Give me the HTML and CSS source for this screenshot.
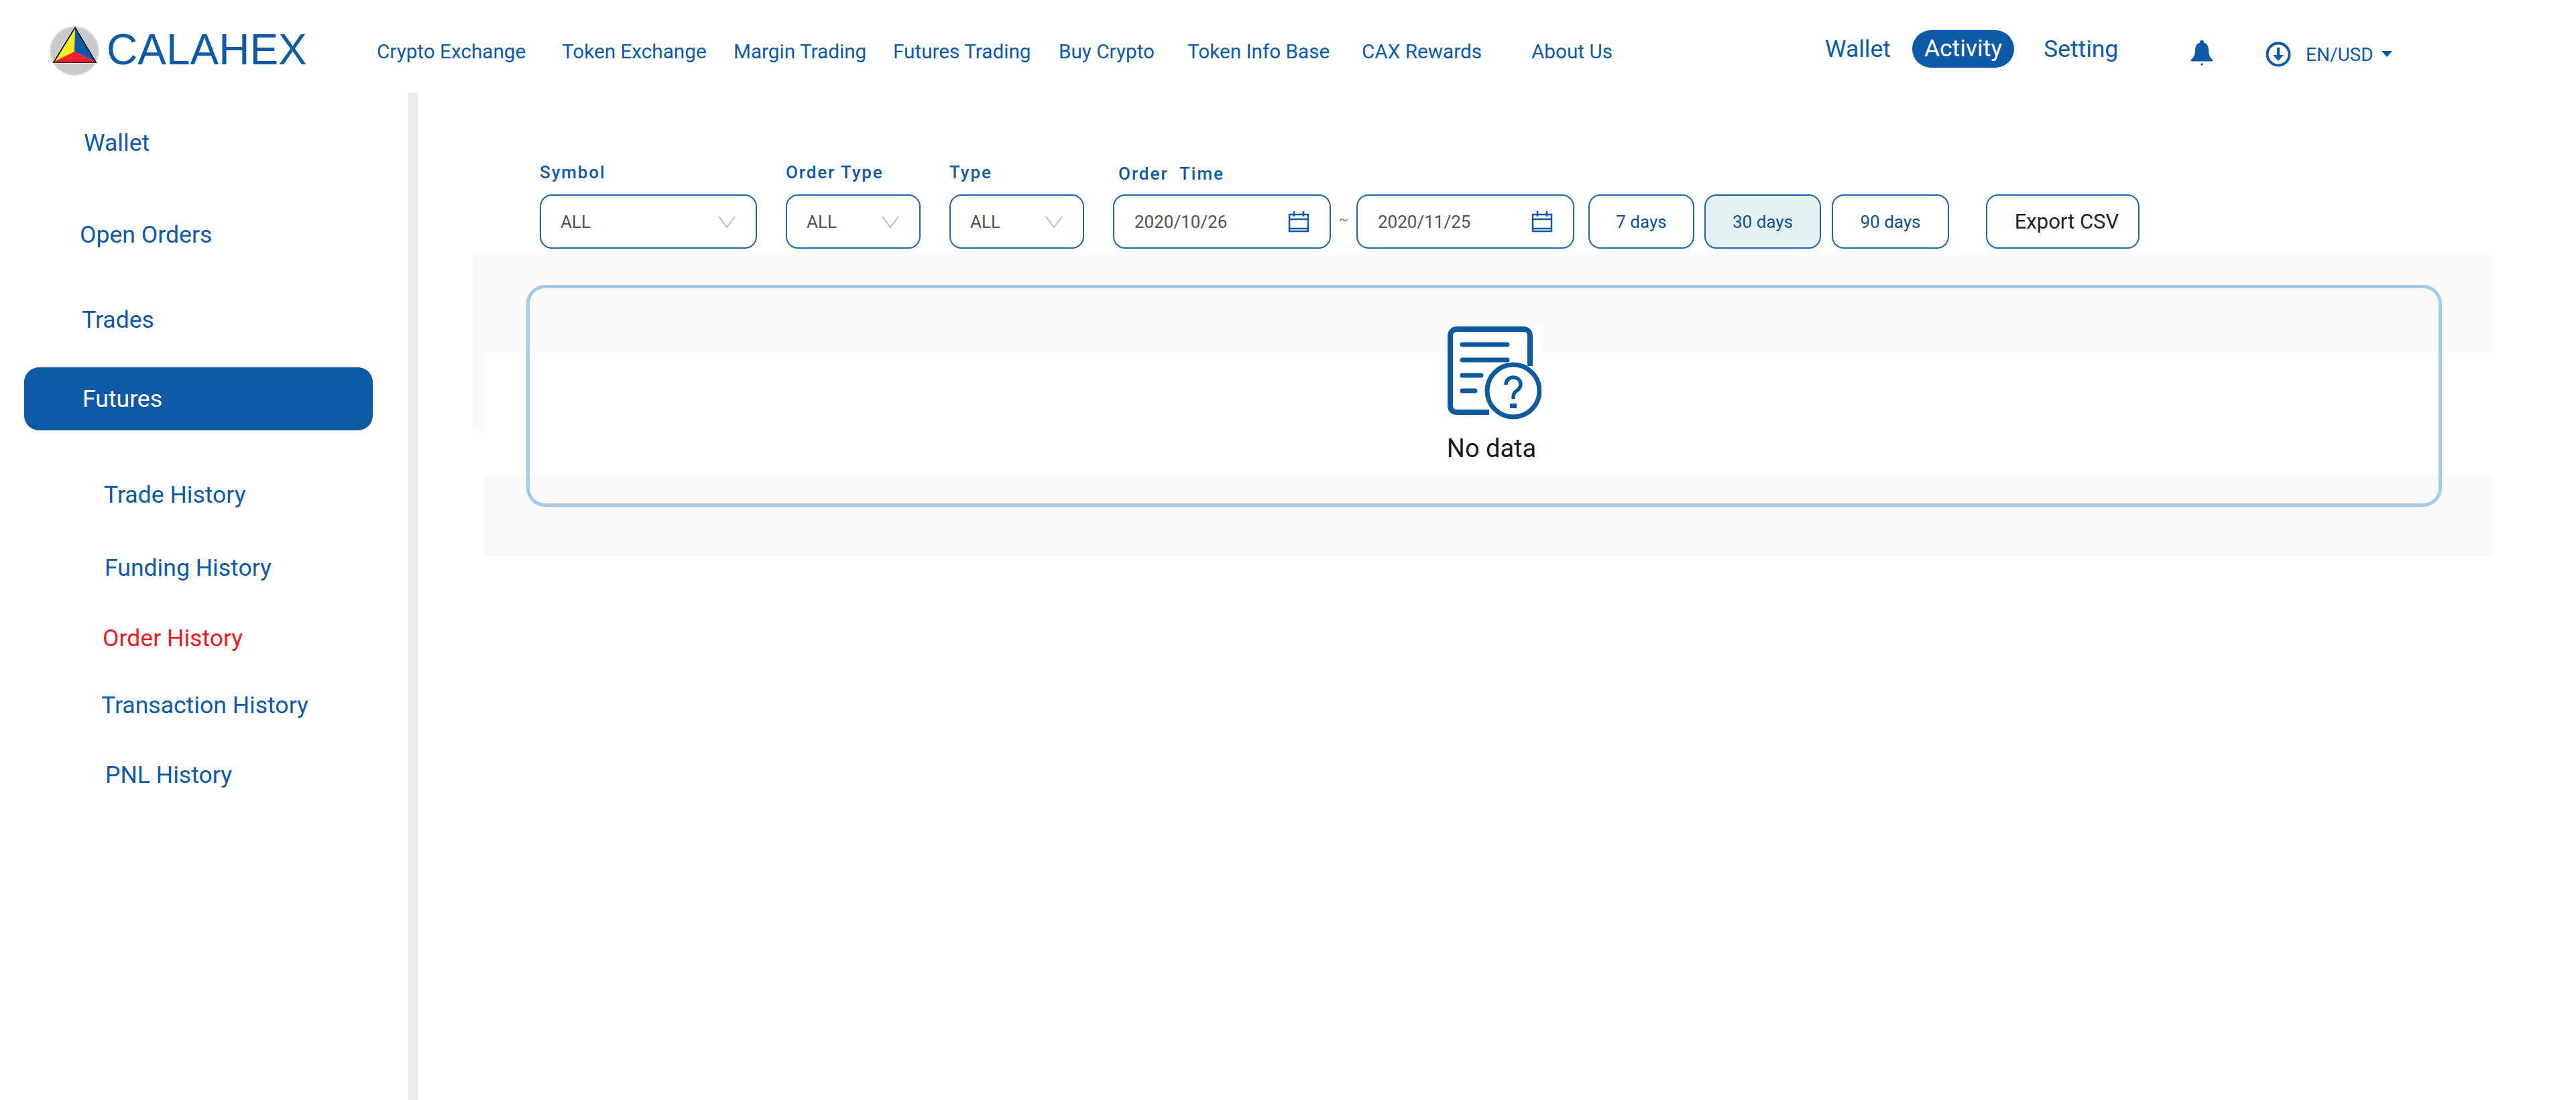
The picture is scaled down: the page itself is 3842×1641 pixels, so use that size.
FILE: index.html
```html
<!DOCTYPE html>
<html lang="en">
<head>
    <meta charset="UTF-8">
    <title>Calahex · Order History</title>
    <link rel="stylesheet" href="styles.css">
</head>
<body>

    <!-- top bar -->
    <header class="topbar">
        <div class="brand">
            <svg class="brand-logo" viewBox="0 0 74 74">
                <circle cx="37" cy="37" r="36" fill="#c9cacc" stroke="#dcdcde" stroke-width="2"/>
                <polygon points="38,-1 3,56 72,56" fill="#fff" opacity="0.7"/>
                <polygon points="38,3 37,38 7,53" fill="#fdec21"/>
                <polygon points="38,3 37,38 68,53" fill="#0f5aa7"/>
                <polygon points="37,38 7,53 68,53" fill="#ee2229"/>
                <path d="M38 2 L6 54 H69 Z" fill="none" stroke="#1a1a2a" stroke-width="2"/>
                <rect x="6" y="53" width="63" height="2" fill="#6b1a22"/>
            </svg>
            <span class="brand-name">CALAHEX</span>
        </div>
        <nav class="mainnav">
            <a>Crypto Exchange</a>
            <a>Token Exchange</a>
            <a>Margin Trading</a>
            <a>Futures Trading</a>
            <a>Buy Crypto</a>
            <a>Token Info Base</a>
            <a>CAX Rewards</a>
            <a>About Us</a>
        </nav>
        <div class="usernav">
            <a>Wallet</a>
            <a class="user-activity">Activity</a>
            <a>Setting</a>
        </div>
        <svg class="bell" viewBox="0 0 34 38">
            <path d="M17 0c2 0 3 1.500 3 3.500 5 1.500 7 6 7 11 0 7 2 11 6 14.500 1 1 .5 2.500-1 2.500H2c-1.500 0-2-1.500-1-2.500 4-3.500 6-7.500 6-14.500 0-5 2-9.500 7-11C14 1.500 15 0 17 0z" fill="#0e5aa7"/>
            <rect x="15.500" y="34.500" width="3" height="3" fill="#0e5aa7"/>
        </svg>
        <svg class="lang-icon" viewBox="0 0 38 38">
            <circle cx="19" cy="19" r="16.500" fill="none" stroke="#0e5aa7" stroke-width="4"/>
            <path d="M19 9v15" stroke="#0e5aa7" stroke-width="4"/>
            <path d="M11 20h16l-8 9z" fill="#0e5aa7"/>
        </svg>
        <span class="lang">EN/USD</span>
        <span class="lang-caret"></span>
    </header>

    <div class="page">
        <!-- side menu -->
        <aside class="sidebar">
            <a class="side-item item-wallet">Wallet</a>
            <a class="side-item item-open">Open Orders</a>
            <a class="side-item item-trades">Trades</a>
            <a class="side-item item-futures">Futures</a>
            <a class="side-sub sub-trade">Trade History</a>
            <a class="side-sub sub-funding">Funding History</a>
            <a class="side-sub sub-order">Order History</a>
            <a class="side-sub sub-transaction">Transaction History</a>
            <a class="side-sub sub-pnl">PNL History</a>
        </aside>
        <div class="rail"></div>

        <main class="content">
            <!-- filters -->
            <div class="filters">
                <div class="field field-symbol">
                    <label>Symbol</label>
                    <div class="control select">
                        <span>ALL</span>
                        <svg class="chevron" viewBox="0 0 26 18"><path d="M1 1l12 16L25 1" fill="none" stroke="#bdbdbd" stroke-width="2"/></svg>
                    </div>
                </div>
                <div class="field field-short">
                    <label>Order Type</label>
                    <div class="control select">
                        <span>ALL</span>
                        <svg class="chevron" viewBox="0 0 26 18"><path d="M1 1l12 16L25 1" fill="none" stroke="#bdbdbd" stroke-width="2"/></svg>
                    </div>
                </div>
                <div class="field field-short">
                    <label>Type</label>
                    <div class="control select">
                        <span>ALL</span>
                        <svg class="chevron" viewBox="0 0 26 18"><path d="M1 1l12 16L25 1" fill="none" stroke="#bdbdbd" stroke-width="2"/></svg>
                    </div>
                </div>
                <div class="field">
                    <label class="label-time">Order&nbsp; Time</label>
                    <div class="time-row">
                        <div class="control date">
                            <span>2020/10/26</span>
                            <svg class="calendar" viewBox="0 0 32 33">
                                <path d="M2 6h28v25H2zM2 13h28M2 27h28M9 1v8M23 1v8" fill="none" stroke="#0e5aa7" stroke-width="2.500"/>
                            </svg>
                        </div>
                        <span class="tilde">~</span>
                        <div class="control date">
                            <span>2020/11/25</span>
                            <svg class="calendar" viewBox="0 0 32 33">
                                <path d="M2 6h28v25H2zM2 13h28M2 27h28M9 1v8M23 1v8" fill="none" stroke="#0e5aa7" stroke-width="2.500"/>
                            </svg>
                        </div>
                        <button class="control preset preset-7">7 days</button>
                        <button class="control preset preset-30 active">30 days</button>
                        <button class="control preset preset-90">90 days</button>
                        <button class="control export">Export CSV</button>
                    </div>
                </div>
            </div>

            <!-- empty table -->
            <section class="table-area">
                <div class="band band-top"></div>
                <div class="table-middle"><div class="band-side"></div></div>
                <div class="band band-bottom"></div>
                <div class="empty-card">
                    <svg class="empty-icon" viewBox="0 0 140 140">
                        <path d="M62 128H14C8 128 4 125 4 118V14C4 8 8 4 14 4H113C119 4 123 8 123 14V59" fill="none" stroke="#0e5a9e" stroke-width="8"/>
                        <g stroke="#0e5a9e" stroke-width="7" stroke-linecap="round">
                            <path d="M22 27H89M22 50H89M22 73H50M22 96H41"/>
                        </g>
                        <circle cx="98" cy="96" r="39" fill="#fff" stroke="#0e5a9e" stroke-width="7"/>
                        <path d="M87 87c0-7 5-11 11-11s11 4 11 10c0 5-3 8-6 10-3 2-5 4-5 10v2" fill="none" stroke="#0e5a9e" stroke-width="5.500"/>
                        <rect x="93" y="115" width="10" height="7" fill="#0e5a9e"/>
                    </svg>
                    <p class="empty-text">No data</p>
                </div>
            </section>
        </main>
    </div>

</body>
</html>
```

FILE: styles.css
```css
* {
    box-sizing: border-box;
}
html, body {
    margin: 0;
    height: 1641px;
    overflow: hidden;
    background: #fff;
}
body {
    font-family: Roboto, "Liberation Sans", sans-serif;
    color: #0e5aa7;
}
a {
    color: inherit;
    text-decoration: none;
}

/* top bar */
.topbar {
    display: flex;
    align-items: flex-start;
    height: 139px;
}
.brand {
    display: flex;
    align-items: flex-start;
    width: 562px;
    padding-left: 74px;
}
.brand-logo {
    width: 74px;
    height: 74px;
    margin-top: 39px;
    overflow: visible;
}
.brand-name {
    margin: 38px 0 0 11px;
    font-family: "Liberation Sans", sans-serif;
    font-size: 64px;
    line-height: 72px;
}
.mainnav {
    display: grid;
    grid-template-columns: 276px 256px 238px 247px 192px 260px 253px 438px;
    margin-top: 57px;
    font-size: 29.7px;
    line-height: 40px;
    white-space: nowrap;
}
.usernav {
    display: grid;
    grid-template-columns: 130px 196px 219px;
    align-items: center;
    height: 56px;
    margin-top: 45px;
    font-size: 35.5px;
}
.user-activity {
    width: 152px;
    height: 56px;
    line-height: 54px;
    text-align: center;
    border-radius: 28px;
    background: #0e5aa7;
    color: #fff;
}
.bell {
    width: 34px;
    height: 38px;
    margin-top: 60px;
}
.lang-icon {
    width: 38px;
    height: 38px;
    margin: 62px 0 0 78px;
}
.lang {
    margin: 66px 0 0 22px;
    font-size: 28px;
    line-height: 32px;
}
.lang-caret {
    width: 0;
    height: 0;
    margin: 76px 0 0 12px;
    border-left: 8px solid transparent;
    border-right: 8px solid transparent;
    border-top: 9px solid #0e5aa7;
}

/* side menu */
.page {
    display: flex;
    height: 1502px;
}
.sidebar {
    width: 608px;
    padding-top: 27px;
    font-size: 35.6px;
}
.side-item {
    display: flex;
    align-items: center;
    height: 94px;
    margin-left: 36px;
    width: 520px;
    border-radius: 22px;
}
.item-wallet { padding-left: 89px; }
.item-open { padding-left: 83px; margin-top: 43px; }
.item-trades { padding-left: 86px; margin-top: 33px; }
.item-futures {
    padding-left: 87px;
    margin-top: 24px;
    background: #0f5aa6;
    color: #fff;
}
.side-sub {
    display: flex;
    align-items: center;
    height: 60px;
}
.sub-trade { margin: 66px 0 0 155px; }
.sub-funding { margin: 49px 0 0 156px; }
.sub-order { margin: 45px 0 0 153px; color: #ed1c24; }
.sub-transaction { margin: 40px 0 0 151px; }
.sub-pnl { margin: 44px 0 0 157px; }
.rail {
    width: 16px;
    background: #ebebeb;
}

/* filters */
.content {
    flex: 1;
}
.filters {
    display: flex;
    gap: 43px;
    padding: 98px 0 0 181px;
}
.field label {
    display: block;
    height: 53px;
    font-size: 26px;
    font-weight: 500;
    line-height: 40px;
    letter-spacing: 1.9px;
}
.field .label-time {
    padding: 2px 0 0 8px;
    letter-spacing: 2px;
}
.field-symbol { width: 324px; }
.field-short { width: 201px; }
.control {
    display: flex;
    align-items: center;
    justify-content: space-between;
    height: 81px;
    border: 2px solid #1f66ad;
    border-radius: 18px;
    background: #fff;
    font-family: inherit;
    font-size: 26px;
    color: #5a5048;
}
.select {
    padding: 0 30px 0 29px;
}
.chevron {
    width: 26px;
    height: 18px;
}
.time-row {
    display: flex;
    align-items: center;
}
.date {
    width: 325px;
    padding: 0 30px;
}
.calendar {
    width: 32px;
    height: 33px;
}
.tilde {
    width: 38px;
    padding-bottom: 8px;
    text-align: center;
    font-size: 22px;
    color: #888;
}
.preset {
    justify-content: center;
    padding: 0;
    color: #0f4f91;
}
.preset-7 { width: 158px; margin-left: 21px; }
.preset-30 { width: 174px; margin-left: 15px; }
.preset-90 { width: 175px; margin-left: 16px; }
.active { background: #e6f1f3; }
.export {
    width: 229px;
    margin-left: 55px;
    justify-content: center;
    padding: 0 0 0 12px;
    font-size: 31px;
    color: #222;
}

/* empty table */
.table-area {
    position: relative;
    width: 3010px;
    margin: 9px 0 0 82px;
}
.band {
    background: #fafafa;
}
.band-top {
    height: 145px;
}
.table-middle {
    height: 185px;
}
.band-side {
    width: 16px;
    height: 118px;
    background: #fafafa;
}
.band-bottom {
    height: 119px;
    margin-left: 16px;
}
.empty-card {
    position: absolute;
    left: 79px;
    top: 45px;
    width: 2857px;
    height: 331px;
    padding: 57px 0 0 30px;
    display: flex;
    flex-direction: column;
    align-items: center;
    border: 5px solid #a4c9e9;
    border-radius: 28px;
}
.empty-icon {
    width: 140px;
    height: 140px;
    background: #fff;
}
.empty-text {
    margin: 20px 0 0;
    padding-right: 8px;
    font-size: 38px;
    line-height: 44px;
    color: #1a1a1a;
}
```
